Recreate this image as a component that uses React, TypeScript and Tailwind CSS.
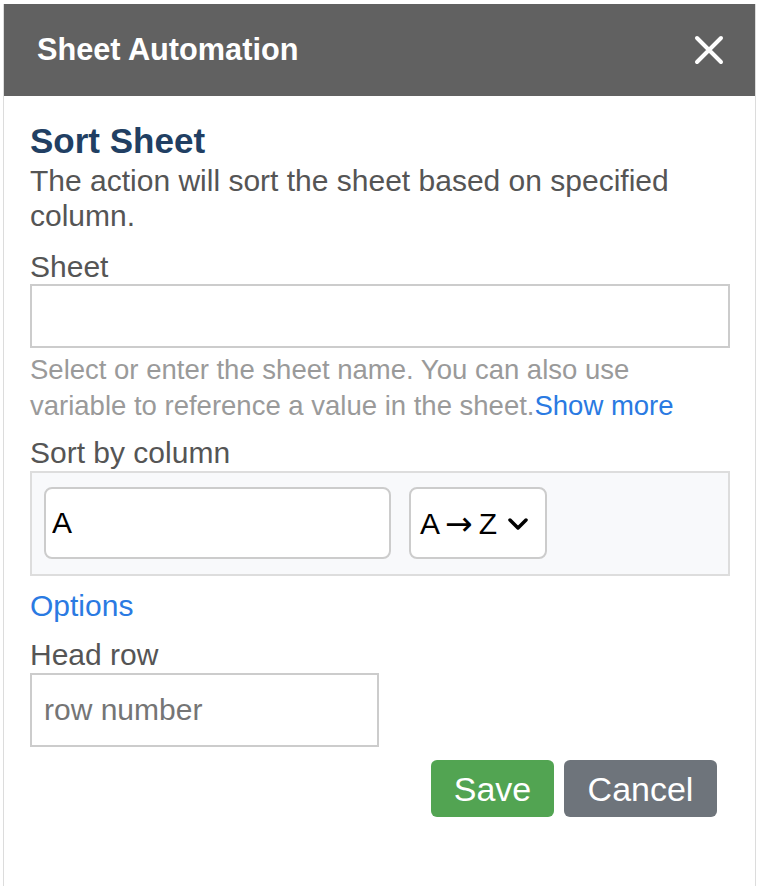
import { useState } from 'react';

function CloseIcon() {
  return (
    <svg width="30" height="30" viewBox="0 0 30 30" fill="none">
      <path d="M3 3L27 27M27 3L3 27" stroke="white" strokeWidth="4" strokeLinecap="round" />
    </svg>
  );
}

function Chevron() {
  return (
    <svg width="22" height="14" viewBox="0 0 22 14" fill="none">
      <path d="M3 3L11 11L19 3" stroke="black" strokeWidth="3.5" strokeLinecap="round" strokeLinejoin="round" />
    </svg>
  );
}

export default function App() {
  const [sheet, setSheet] = useState('');
  const [column, setColumn] = useState('A');
  const [headRow, setHeadRow] = useState('');

  return (
    <div className="min-h-[886px] bg-white pl-[3px] pt-[4px] font-['Liberation_Sans',Arial,sans-serif]">
      <div className="flex min-h-[882px] w-[753px] flex-col border-x border-[#dcdcdc]">
        {/* Header */}
        <div className="flex h-[92px] items-center justify-between bg-[#616161] pl-[33px] pr-[31px]">
          <h1 className="text-[30.7px] font-bold leading-none text-white">Sheet Automation</h1>
          <button className="flex h-[30px] w-[30px] items-center justify-center">
            <CloseIcon />
          </button>
        </div>

        {/* Body */}
        <div className="flex flex-col pl-[26px] pr-[25px] pt-[25px]">
          <h2 className="text-[35px] font-bold leading-[40px] text-[#213f63]">Sort Sheet</h2>
          <p className="mt-[2px] text-[30px] leading-[35px] text-[#555]">
            The action will sort the sheet based on specified column.
          </p>

          <label className="mt-[16px] text-[30px] leading-[35px] text-[#555]">Sheet</label>
          <input
            value={sheet}
            onChange={(e) => setSheet(e.target.value)}
            className="h-[64px] w-full border-2 border-[#cccccc] bg-white px-3 text-[30px] outline-none"
          />
          <p className="mt-[4px] text-[27.5px] leading-[36px] text-[#9a9a9a]">
            Select or enter the sheet name. You can also use variable to reference a value in the sheet.
            <a className="cursor-pointer text-[#2a7ae2]">Show more</a>
          </p>

          <label className="mt-[11px] text-[30px] leading-[35px] text-[#555]">Sort by column</label>
          <div className="mt-px flex gap-[18px] border-2 border-[#dddddd] bg-[#f8f9fb] pb-[15px] pl-[12px] pt-[14px]">
            <input
              value={column}
              onChange={(e) => setColumn(e.target.value)}
              className="h-[72px] w-[347px] rounded-[8px] border-2 border-[#cccccc] bg-white px-[6px] text-[30px] text-black outline-none"
            />
            <div className="flex h-[72px] w-[138px] items-center rounded-[8px] border-2 border-[#cccccc] bg-white pl-[9px] text-[30px] text-black">
              <span>A</span>
              <span className="ml-[5px] font-['DejaVu_Sans',sans-serif] text-[33px] leading-none">→</span>
              <span className="ml-[6px]">Z</span>
              <span className="ml-[10px] mt-[2px]">
                <Chevron />
              </span>
            </div>
          </div>

          <a className="mt-[12px] cursor-pointer text-[30px] leading-[35px] text-[#2a7ae2]">Options</a>

          <label className="mt-[14px] text-[30px] leading-[35px] text-[#555]">Head row</label>
          <input
            value={headRow}
            onChange={(e) => setHeadRow(e.target.value)}
            placeholder="row number"
            className="mt-px h-[74px] w-[349px] border-2 border-[#cccccc] bg-white px-[12px] text-[30px] text-black outline-none placeholder:text-[#757575]"
          />

          <div className="mt-[13px] flex justify-end gap-[10px] pr-[13px]">
            <button className="h-[57px] w-[123px] rounded-[6px] bg-[#52a452] text-[34px] leading-none text-white">
              Save
            </button>
            <button className="h-[57px] w-[153px] rounded-[6px] bg-[#6e747b] text-[34px] leading-none text-white">
              Cancel
            </button>
          </div>
        </div>
      </div>
    </div>
  );
}
